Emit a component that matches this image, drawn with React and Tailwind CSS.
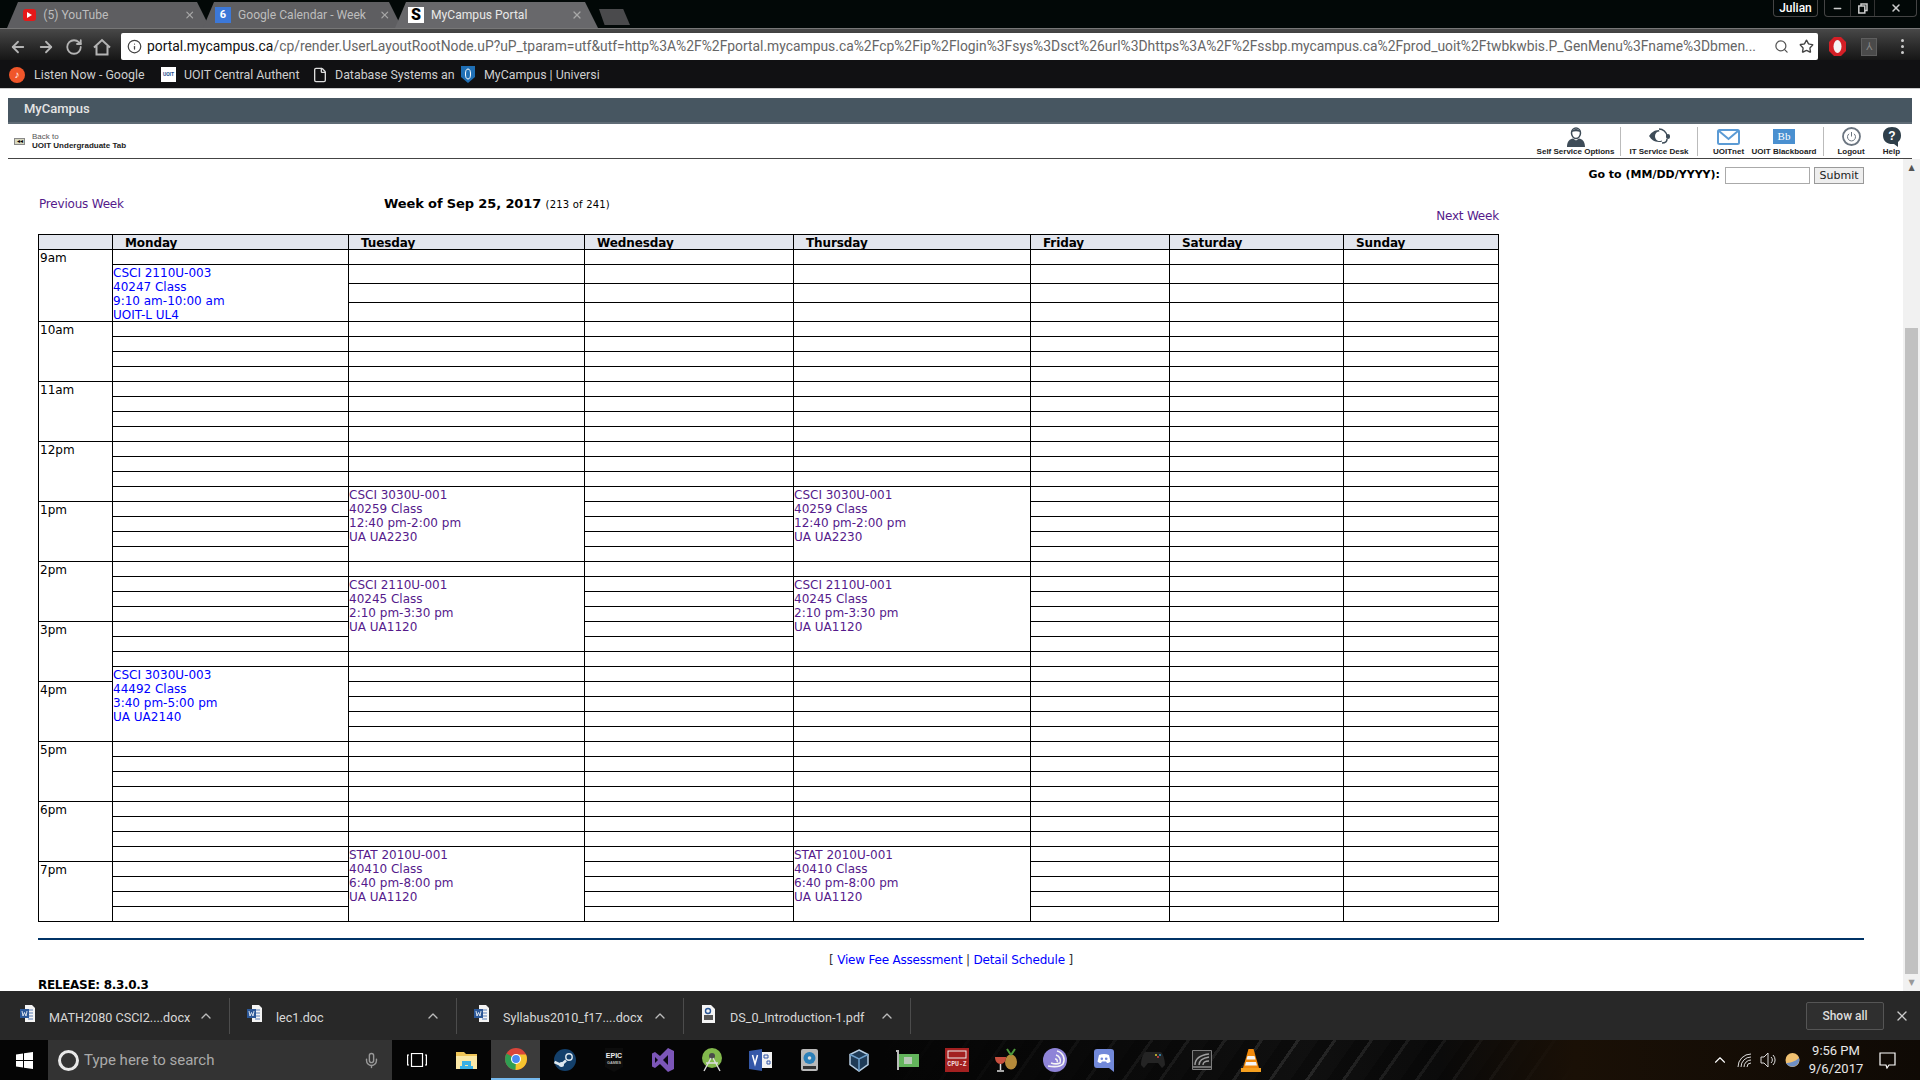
import { ArrowLeft, ArrowRight, RotateCw, Info, Star, Search, Mic, ChevronUp, X, Minus, File } from 'lucide-react';

const verdana = 'font-["DejaVu_Sans",sans-serif]';

// 시간표 슬롯: 높이(px)와 시간 라벨
const hours = ['9am', '10am', '11am', '12pm', '1pm', '2pm', '3pm', '4pm', '5pm', '6pm', '7pm'];
const days = [
  { name: 'Monday', width: 'w-[236px]' },
  { name: 'Tuesday', width: 'w-[236px]' },
  { name: 'Wednesday', width: 'w-[209px]' },
  { name: 'Thursday', width: 'w-[237px]' },
  { name: 'Friday', width: 'w-[139px]' },
  { name: 'Saturday', width: 'w-[174px]' },
  { name: 'Sunday', width: 'w-[155px]' },
];

const purple = 'text-[#551a8b]';
const blue = 'text-[#0000ff]';

// 슬롯 번호 기준 수업 위치 (0 = 9:00)
const events = {
  Monday: [
    { start: 1, span: 3, color: blue, lines: ['CSCI 2110U-003', '40247 Class', '9:10 am-10:00 am', 'UOIT-L UL4'] },
    { start: 27, span: 5, color: blue, lines: ['CSCI 3030U-003', '44492 Class', '3:40 pm-5:00 pm', 'UA UA2140'] },
  ],
  Tuesday: [
    { start: 15, span: 5, color: purple, lines: ['CSCI 3030U-001', '40259 Class', '12:40 pm-2:00 pm', 'UA UA2230'] },
    { start: 21, span: 5, color: purple, lines: ['CSCI 2110U-001', '40245 Class', '2:10 pm-3:30 pm', 'UA UA1120'] },
    { start: 39, span: 5, color: purple, lines: ['STAT 2010U-001', '40410 Class', '6:40 pm-8:00 pm', 'UA UA1120'] },
  ],
  Thursday: [
    { start: 15, span: 5, color: purple, lines: ['CSCI 3030U-001', '40259 Class', '12:40 pm-2:00 pm', 'UA UA2230'] },
    { start: 21, span: 5, color: purple, lines: ['CSCI 2110U-001', '40245 Class', '2:10 pm-3:30 pm', 'UA UA1120'] },
    { start: 39, span: 5, color: purple, lines: ['STAT 2010U-001', '40410 Class', '6:40 pm-8:00 pm', 'UA UA1120'] },
  ],
};

function Schedule() {
  const slots = Array.from({ length: 44 }, (_, i) => i);
  return (
    <table className="table-fixed border-collapse w-[1461px] text-[12px] leading-[14px] text-black">
      <colgroup>
        <col className="w-[74px]" />
        {days.map((d) => <col key={d.name} className={d.width} />)}
      </colgroup>
      <thead>
        <tr className="h-[15px]">
          <th className="border border-black bg-[#e3e6ee] p-0" />
          {days.map((d) => (
            <th key={d.name} className="border border-black bg-[#e3e6ee] p-0 pl-[12px] text-left font-bold text-[12px] leading-[13px] tracking-[-0.1px]">
              <div className="relative top-px">{d.name}</div>
            </th>
          ))}
        </tr>
      </thead>
      <tbody>
        {slots.map((s) => {
          const height = s >= 1 && s <= 3 ? 'h-[19px]' : 'h-[15px]';
          return (
            <tr key={s} className={height}>
              {s % 4 === 0 && (
                <td rowSpan={4} className="border border-black p-0 pl-px align-top font-normal">
                  <div className="relative top-px">{hours[s / 4]}</div>
                </td>
              )}
              {days.map((d) => {
                const list = events[d.name] || [];
                const ev = list.find((e) => e.start === s);
                const covered = list.some((e) => s > e.start && s < e.start + e.span);
                if (covered) return null;
                if (ev) {
                  return (
                    <td key={d.name} rowSpan={ev.span} className={`border border-black p-0 align-top ${ev.color}`}>
                      <div className="relative top-px">
                        {ev.lines.map((l) => <div key={l}>{l}</div>)}
                      </div>
                    </td>
                  );
                }
                return <td key={d.name} className="border border-black p-0" />;
              })}
            </tr>
          );
        })}
      </tbody>
    </table>
  );
}

function Tab({ icon, title, active, width, pad, titleWidth, overlap }) {
  return (
    <div className={`relative flex items-center h-[26px] ${width} ${overlap} ${active ? 'z-10' : ''}`}>
      <div className={`absolute inset-0 [clip-path:polygon(0_100%,11px_0,calc(100%-13px)_0,100%_100%)] ${active ? 'bg-[#68686b]' : 'bg-[#5e5e61]'}`} />
      <div className={`relative flex items-center w-full ${pad} gap-[7px]`}>
        {icon}
        <span className={`${titleWidth} whitespace-nowrap text-[12.1px] ${active ? 'text-[#e8e8e8]' : 'text-[#bdbdbd]'}`}>{title}</span>
        <X size={12} className="ml-auto text-[#a8a8a8]" strokeWidth={2.5} />
      </div>
    </div>
  );
}

function Bookmark({ icon, label, width, gap }) {
  return (
    <div className={`flex items-center ${gap} ${width}`}>
      {icon}
      <span className="whitespace-nowrap text-[12.4px] text-[#cfcfcf]">{label}</span>
    </div>
  );
}

function PortalIcon({ label, width, margin, children }) {
  return (
    <div className={`flex flex-col items-center justify-end h-[30px] ${width} ${margin}`}>
      <div className="h-[21px] flex items-center">{children}</div>
      <span className="text-[8px] leading-[9px] font-bold text-[#222] whitespace-nowrap">{label}</span>
    </div>
  );
}

function Download({ icon, name }) {
  return (
    <div className="flex items-center w-[227px] h-[36px] border-r border-[#4c4c4c] pl-[17px] pr-[15px]">
      <div className="w-[15px] shrink-0 flex justify-center -mt-[4px]">{icon}</div>
      <span className="ml-[14px] pt-[6px] flex-1 whitespace-nowrap text-[12.6px] text-[#d8d8d8]">{name}</span>
      <ChevronUp size={16} className="text-[#bbb]" />
    </div>
  );
}

const WordIcon = () => (
  <svg width="15" height="17" viewBox="0 0 15 17">
    <path d="M5 0h7l3 3v14H5z" fill="#f4f4f4" />
    <path d="M8 5h5M8 8h5M8 11h5M8 14h5" stroke="#5a7fb8" />
    <rect x="0" y="4" width="9" height="9" fill="#2b5797" />
    <path d="M2 6l1 5 1.500-3.500L6 11l1-5" stroke="#fff" fill="none" strokeWidth="0.8" />
  </svg>
);

const PdfIcon = () => (
  <svg width="13" height="18" viewBox="0 0 13 18">
    <path d="M0 0h9l4 4v14H0z" fill="#f4f4f4" />
    <circle cx="6" cy="6" r="2.500" fill="none" stroke="#2b5797" strokeWidth="1.400" />
    <rect x="2" y="10" width="9" height="5" fill="#555" />
  </svg>
);

// 작업 표시줄 아이콘
function TaskIcon({ children, active, margin }) {
  return (
    <div className={`flex items-center justify-center shrink-0 w-[49px] h-[40px] ${margin} ${active ? 'bg-[#3b3b3b] border-b-[2px] border-[#76b9ed]' : ''}`}>
      {children}
    </div>
  );
}

const taskIcons = [
  <svg key="view" width="20" height="14" viewBox="0 0 20 14" fill="none" stroke="#fff" strokeWidth="1.200"><rect x="4.500" y="0.500" width="11" height="13" /><path d="M2 2H0.600v10H2M18 2h1.400v10H18" /></svg>,
  <svg key="explorer" width="22" height="18" viewBox="0 0 22 18"><path d="M0 1h8l2 2h11v15H0z" fill="#f0c557" /><path d="M0 5h21v13H0z" fill="#fbe8a6" /><path d="M6 10h9v8h-3v-4H9v4H6z" fill="#3ab0e6" /><rect x="4" y="15" width="13" height="3" fill="#3ab0e6" /></svg>,
  <svg key="chrome" width="22" height="22" viewBox="0 0 22 22"><circle cx="11" cy="11" r="11" fill="#d9453a" /><path d="M11 11L1.500 5.500A11 11 0 0 0 11 22z" fill="#2f9e52" /><path d="M11 11l-.500 11A11 11 0 0 0 21 6.500H11z" fill="#f6c42f" /><circle cx="11" cy="11" r="5" fill="#fff" /><circle cx="11" cy="11" r="3.900" fill="#4a8af4" /></svg>,
  <svg key="steam" width="22" height="22" viewBox="0 0 22 22"><circle cx="11" cy="11" r="11" fill="#14406b" /><circle cx="15" cy="8" r="3.200" fill="none" stroke="#dfe8ef" strokeWidth="1.400" /><path d="M0.500 13l6.500 3 5-4.500" stroke="#dfe8ef" strokeWidth="2.500" fill="none" /><circle cx="7.500" cy="15.500" r="2.500" fill="#dfe8ef" /></svg>,
  <svg key="epic" width="20" height="24" viewBox="0 0 20 24"><path d="M1 0h18v19l-9 5-9-5z" fill="#0c0c0c" /><text x="10" y="10" textAnchor="middle" fontSize="7" fontWeight="bold" fill="#eee" fontFamily="'Liberation Sans',sans-serif">EPIC</text><text x="10" y="16" textAnchor="middle" fontSize="3.800" fontWeight="bold" fill="#bbb" fontFamily="'Liberation Sans',sans-serif">GAMES</text></svg>,
  <svg key="vs" width="24" height="24" viewBox="0 0 24 24"><path d="M17 0l6 3v18l-6 3-8-8-5 4-3-1.500v-13L4 4l5 4z" fill="#7c56b8" /><path d="M17 7l-5 5 5 5z" fill="#0a0812" /><path d="M4 9v6l3-3z" fill="#0a0812" /></svg>,
  <svg key="android" width="22" height="24" viewBox="0 0 22 24"><circle cx="11" cy="10" r="10" fill="#82b84c" /><circle cx="11" cy="8" r="3" fill="#4a4a4a" /><path d="M10 10L3 23M12 10l7 13M5 15h12" stroke="#dcdcdc" strokeWidth="1.400" fill="none" /></svg>,
  <svg key="visio" width="23" height="22" viewBox="0 0 23 22"><path d="M9 3h14v16H9z" fill="#f2f2f2" /><path d="M0 2l13-2v22L0 20z" fill="#3458a8" /><path d="M3.500 6l2.500 9 2.500-9" stroke="#fff" fill="none" strokeWidth="1.500" /><path d="M15 6h4v3h-4zM18 12h3v3h-3z" fill="none" stroke="#3458a8" /></svg>,
  <svg key="hdd" width="17" height="22" viewBox="0 0 17 22"><rect width="17" height="22" rx="2" fill="#b9b9b9" /><circle cx="8.500" cy="9" r="6" fill="#2c80b9" /><circle cx="8.500" cy="9" r="1.800" fill="#ddd" /><rect x="2" y="17" width="13" height="3" fill="#333" /></svg>,
  <svg key="vbox" width="20" height="23" viewBox="0 0 20 23" fill="none"><path d="M10 1l9 4.500v10L10 22 1 15.500v-10z" fill="#1f3b57" stroke="#b6cde2" strokeWidth="1.500" /><path d="M1 5.500L10 10l9-4.500M10 10v12" stroke="#6ea0cc" strokeWidth="1.500" /></svg>,
  <svg key="gpu" width="23" height="20" viewBox="0 0 23 20"><path d="M0 0h3v20H1V2H0z" fill="#bbb" /><rect x="3" y="4" width="20" height="13" fill="#63b45c" /><rect x="8" y="7" width="8" height="7" fill="#b8c8b8" /></svg>,
  <svg key="cpuz" width="24" height="24" viewBox="0 0 24 24"><rect width="24" height="24" fill="#a32020" /><rect x="3" y="3" width="18" height="7" fill="none" stroke="#eee" /><text x="12" y="18" textAnchor="middle" fontSize="6.500" fontWeight="bold" fill="#f2dada" fontFamily="'Liberation Mono',monospace">CPU-Z</text></svg>,
  <svg key="drink" width="24" height="24" viewBox="0 0 24 24"><ellipse cx="17" cy="14" rx="6" ry="7.500" fill="#b58a3a" /><path d="M17 7l-4-6M17 7l4-6" stroke="#4f9a3c" strokeWidth="2" /><path d="M1 9h11c0 4-2 7-5.500 7S1 13 1 9z" fill="#c8503f" /><path d="M6.500 16v6M3 23h7" stroke="#ddd" strokeWidth="1.500" /></svg>,
  <svg key="torrent" width="24" height="24" viewBox="0 0 24 24" fill="none"><circle cx="12" cy="12" r="12" fill="#8f84d8" /><path d="M14 3a9 9 0 0 1 6 13c-3 3-9 3-15 2M13 7a6 6 0 0 1 4 8c-2 1-6 1-9 0M12 11a2 2 0 0 1 2 3" stroke="#f4f4f4" strokeWidth="1.600" /></svg>,
  <svg key="discord" width="20" height="23" viewBox="0 0 20 23"><path d="M3 0h14a3 3 0 0 1 3 3v20l-5-4H3a3 3 0 0 1-3-3V3a3 3 0 0 1 3-3z" fill="#7289da" /><path d="M5 6c3-1.400 7-1.400 10 0l1.500 6.500c-1 1-2.500 1.500-3.500 1.500l-1-1.500H8L7 14c-1 0-2.500-.500-3.500-1.500z" fill="#fff" /><circle cx="7.800" cy="9.800" r="1.300" fill="#7289da" /><circle cx="12.200" cy="9.800" r="1.300" fill="#7289da" /></svg>,
  <svg key="pad" width="24" height="17" viewBox="0 0 24 17"><path d="M5 0h14c3 0 5 8 5 13l-3 3-4-5H7l-4 5-3-3C0 8 2 0 5 0z" fill="#242424" /><circle cx="17" cy="5" r="1" fill="#d44" /><circle cx="15" cy="3" r="1" fill="#dc3" /><circle cx="19" cy="3" r="1" fill="#39c" /></svg>,
  <svg key="gfx" width="20" height="20" viewBox="0 0 20 20" fill="none"><path d="M.500.500h19v19H.500z" fill="#222" stroke="#7c7c7c" /><path d="M3 15c0-7 6-10 14-11M7 15c0-4 4-7 10-8M11 15c0-3 2-4 6-4" stroke="#a0a0a0" strokeWidth="1.400" /><path d="M1 17h18" stroke="#8c8c8c" strokeWidth="1.500" /></svg>,
  <svg key="vlc" width="20" height="23" viewBox="0 0 20 23"><path d="M7.500 0h5l5.500 19H2z" fill="#f28a0c" /><path d="M6.500 7h7l1 3.500h-9zM5 13h10l1 3.500H4z" fill="#f4f4f4" /><rect x="0" y="19" width="20" height="4" fill="#f6a01f" /></svg>,
];

export default function App() {
  return (
    <div className="w-[1920px] h-[1080px] overflow-hidden flex flex-col bg-white font-['Roboto','Noto_Sans',sans-serif]">
      {/* 브라우저 탭 */}
      <div className="h-[28px] bg-[#020807] flex items-end pl-[7px] relative shrink-0">
        <Tab width="w-[203px]" pad="pl-[16px] pr-[15px]" titleWidth="w-[140px]" title="(5) YouTube" icon={<div className="w-[14px] h-[12px] rounded-[3px] bg-[#e61919] flex items-center justify-center"><div className="w-0 h-0 border-y-[3px] border-y-transparent border-l-[5px] border-l-white" /></div>} />
        <Tab overlap="-ml-[7px]" width="w-[199px]" pad="pl-[12px] pr-[11px]" titleWidth="w-[140px]" title="Google Calendar - Week" icon={<div className="w-[16px] h-[16px] bg-[#3c78d8] text-white text-[11px] font-bold flex items-center justify-center shrink-0">6</div>} />
        <Tab active overlap="-ml-[7px]" width="w-[203px]" pad="pl-[13px] pr-[15px]" titleWidth="w-[130px]" title="MyCampus Portal" icon={<div className="w-[16px] h-[16px] bg-white text-black text-[16px] font-black flex items-center justify-center shrink-0">S</div>} />
        <div className="ml-[1px] mb-[3px] w-[31px] h-[16px] bg-[#4a4a4c] [clip-path:polygon(0_0,78%_0,100%_100%,18%_100%)]" />
        <div className="absolute right-0 top-0 flex items-start">
          <div className="w-[45px] h-[17px] mr-[6px] border border-t-0 border-[#444] rounded-b-[4px] text-white text-[12px] font-medium text-center leading-[16px]">Julian</div>
          <div className="w-[93px] h-[17px] mr-[3px] border border-t-0 border-[#444] rounded-b-[4px] flex items-center text-white">
            <div className="w-[25px] flex justify-center"><Minus size={11} strokeWidth={3} className="text-[#ccc]" /></div>
            <div className="w-[25px] h-full flex items-center justify-center border-x border-[#333]">
              <svg width="10" height="11" viewBox="0 0 10 11" fill="none" stroke="#ccc" strokeWidth="1.500"><rect x="0.800" y="3" width="6" height="7" /><path d="M3 3V1h6v6.500H7" /></svg>
            </div>
            <div className="flex-1 flex justify-center"><X size={12} strokeWidth={3} className="text-[#ccc]" /></div>
          </div>
        </div>
      </div>

      {/* 주소 표시줄 */}
      <div className="h-[32px] shrink-0 border-t border-[#777] bg-gradient-to-b from-[#484848] to-[#161616] flex items-end">
        <div className="flex items-center h-[27px] w-[121px] pl-[9px] gap-[10px] text-[#b4b4b4] shrink-0">
          <ArrowLeft size={18} strokeWidth={2.4} />
          <ArrowRight size={18} strokeWidth={2.4} />
          <RotateCw size={18} strokeWidth={2.4} />
          <svg width="18" height="18" viewBox="0 0 18 18" fill="none" stroke="currentColor" strokeWidth="2"><path d="M1 9.500L9 2l8 7.500M3.500 8v8.500h11V8" /></svg>
        </div>
        <div className="w-[1697px] h-[27px] shrink-0 bg-white rounded-[2px] flex items-center pl-[6px] text-[13.87px] text-[#666] whitespace-nowrap overflow-hidden">
          <Info size={15} className="text-[#444] mr-[5px] shrink-0" />
          <span className="w-[1619px] shrink-0"><span className="text-[#111]">portal.mycampus.ca</span>/cp/render.UserLayoutRootNode.uP?uP_tparam=utf&amp;utf=http%3A%2F%2Fportal.mycampus.ca%2Fcp%2Fip%2Flogin%3Fsys%3Dsct%26url%3Dhttps%3A%2F%2Fssbp.mycampus.ca%2Fprod_uoit%2Ftwbkwbis.P_GenMenu%3Fname%3Dbmen...</span>
          <Search size={15} className="ml-[8px] shrink-0 text-[#555]" />
          <Star size={15} strokeWidth={2.2} className="ml-[10px] shrink-0 text-[#444]" />
        </div>
        <div className="flex-1 h-[27px] flex items-center pl-[11px]">
          <svg width="17" height="19" viewBox="0 0 17 19"><path d="M5 0h7l5 5v9l-5 5H5l-5-5V5z" fill="#d41f26" /><ellipse cx="8.500" cy="9.500" rx="4" ry="6.500" fill="#f4f4f4" /></svg>
          <div className="ml-[15px] w-[16px] h-[18px] bg-[#4a4a4a] border border-[#5e5e5e] text-[#888] text-[11px] leading-[16px] text-center">⅄</div>
          <div className="ml-[24px] flex flex-col gap-[3px]">
            <div className="w-[3px] h-[3px] rounded-full bg-[#ccc]" />
            <div className="w-[3px] h-[3px] rounded-full bg-[#ccc]" />
            <div className="w-[3px] h-[3px] rounded-full bg-[#ccc]" />
          </div>
        </div>
      </div>

      {/* 북마크 */}
      <div className="h-[29px] bg-[#111113] border-b border-[#ccc] flex items-center pl-[9px] pt-[2px] shrink-0">
        <Bookmark width="w-[152px]" gap="gap-[9px]" label="Listen Now - Google" icon={<div className="shrink-0 w-[16px] h-[16px] rounded-full bg-[#f0562a] text-white text-[10px] text-center leading-[16px]">♪</div>} />
        <Bookmark width="w-[151px]" gap="gap-[8px]" label="UOIT Central Authent" icon={<div className="shrink-0 w-[15px] h-[15px] bg-white text-[#1b4f8f] text-[5px] font-bold text-center leading-[15px]">UOIT</div>} />
        <Bookmark width="w-[149px]" gap="gap-[7px]" label="Database Systems an" icon={<File size={16} className="shrink-0 text-[#ddd]" />} />
        <Bookmark width="w-[138px]" gap="gap-[9px]" label="MyCampus | Universi" icon={<svg className="shrink-0" width="14" height="17" viewBox="0 0 14 17"><path d="M0 0h14v11l-7 6-7-6z" fill="#1f6fb5" /><ellipse cx="7" cy="8" rx="2.500" ry="5" fill="none" stroke="#fff" /></svg>} />
      </div>

      {/* 포털 페이지 */}
      <div className="h-[902px] shrink-0 bg-white overflow-hidden flex flex-col relative">
        <div className="mt-[9px] ml-[8px] w-[1904px] h-[26px] bg-[#475661] border-b-2 border-[#5f6b75] text-[#e4e4e4] text-[13px] font-medium pl-[16px] leading-[22px] shrink-0">MyCampus</div>
        <div className="ml-[8px] w-[1904px] h-[35px] border-b border-[#444] flex items-center justify-between shrink-0 font-['Liberation_Sans',sans-serif]">
          <div className="flex items-center pl-[6px] gap-[7px]">
            <div className="w-[11px] h-[7px] bg-[#d8d8c0] border border-[#888] text-[6px] leading-[5px] text-center">◂◂</div>
            <div className="text-[8px] leading-[9px] text-[#222]">
              <div className="text-[#555]">Back to</div>
              <div className="font-bold">UOIT Undergraduate Tab</div>
            </div>
          </div>
          <div className="flex items-end pr-[12px]">
            <PortalIcon label="Self Service Options" width="w-[77px]">
              <svg width="20" height="20" viewBox="0 0 20 20"><path d="M5.500 6a4.500 5 0 0 1 9 0c0 3-2 5.500-4.500 5.500S5.500 9 5.500 6z" fill="#fff" stroke="#3e4c58" strokeWidth="1.500" /><path d="M5.500 5c1-4 8-4 9 0-3-1-6-1-9 0z" fill="#3e4c58" /><path d="M1 20c0-6 3-8 6-8.500l3 2 3-2c3 .500 6 2.500 6 8.500z" fill="#3e4c58" /></svg>
            </PortalIcon>
            <div className="ml-[6px] w-px h-[29px] bg-[#bbb]" />
            <PortalIcon label="IT Service Desk" width="w-[58px]" margin="ml-[9px]">
              <svg width="22" height="18" viewBox="0 0 22 18" fill="none"><path d="M11 1a8 8 0 0 1 8 7" stroke="#3e4c58" strokeWidth="1.500" /><path d="M11 2C6 2 3 5 1 8c2 3 5 6 10 6 1 0 2 0 3-.500" fill="#3e4c58" /><path d="M7 8a4.500 4.500 0 0 1 9 0c0 3-2 5-4.500 5S7 11 7 8z" fill="#fff" /><rect x="18" y="6" width="4" height="5" rx="2" fill="#3e4c58" /><path d="M19 11c0 3-2 4-5 4" stroke="#3e4c58" strokeWidth="1.500" /></svg>
            </PortalIcon>
            <div className="ml-[9px] w-px h-[29px] bg-[#bbb]" />
            <PortalIcon label="UOITnet" width="w-[31px]" margin="ml-[15px]">
              <svg width="23" height="16" viewBox="0 0 23 16" fill="none"><rect x="1" y="1" width="21" height="14" rx="1.500" fill="#fff" stroke="#5b9bd5" strokeWidth="2" /><path d="M2 2l9.500 8L21 2" stroke="#5b9bd5" strokeWidth="2" /></svg>
            </PortalIcon>
            <PortalIcon label="UOIT Blackboard" width="w-[64px]" margin="ml-[8px]">
              <div className="w-[22px] h-[15px] bg-[#4a90d0] text-white text-[11px] font-['Liberation_Serif',serif] text-center leading-[15px]">Bb</div>
            </PortalIcon>
            <div className="ml-[7px] w-px h-[29px] bg-[#bbb]" />
            <PortalIcon label="Logout" width="w-[26px]" margin="ml-[14px]">
              <svg width="19" height="19" viewBox="0 0 19 19" fill="none"><circle cx="9.500" cy="9.500" r="8.500" stroke="#6b7580" strokeWidth="1.800" /><path d="M9.500 5v4.500" stroke="#6b7580" /><path d="M7 6.800a4 4 0 1 0 5 0" stroke="#6b7580" /></svg>
            </PortalIcon>
            <PortalIcon label="Help" width="w-[17px]" margin="ml-[19px]">
              <svg width="18" height="20" viewBox="0 0 18 20"><path d="M9 0c5.500 0 9 3 9 8.500 0 3-1 5-3 6.500v5l-4-3C4 17.500 0 14 0 8.500S3.500 0 9 0z" fill="#2f3f4a" /><text x="9" y="13" textAnchor="middle" fontSize="12" fontWeight="bold" fill="#fff">?</text></svg>
            </PortalIcon>
          </div>
        </div>

        {/* 스크롤 내용 */}
        <div className={`flex-1 min-h-0 flex ${verdana}`}>
          <div className="w-[1903px] overflow-hidden pl-[38px] pr-[39px]">
            <div className="flex justify-end items-center h-[17px] mt-[8px] gap-[5px]">
              <span className="text-[11px] font-bold text-black">Go to (MM/DD/YYYY):</span>
              <input aria-label="date" className="w-[85px] h-[17px] border border-[#aaa] bg-white" />
              <button className="w-[50px] h-[17px] ml-[-1px] border border-[#999] bg-[#eee] text-[11px] text-[#222] leading-none">Submit</button>
            </div>
            <div className="relative h-[50px] w-[1461px]">
              <a className="absolute left-px top-[12px] text-[12px] tracking-[-0.2px] text-[#551a8b] leading-[16px]">Previous Week</a>
              <div className="absolute left-[346px] top-[12px] text-[13px] font-bold tracking-[-0.12px] text-black leading-[16px] whitespace-nowrap">Week of Sep 25, 2017 <span className="text-[10px] font-normal tracking-[0.2px]">(213 of 241)</span></div>
              <a className="absolute right-0 top-[24px] text-[12px] tracking-[-0.2px] text-[#551a8b] leading-[16px]">Next Week</a>
            </div>
            <Schedule />
            <div className="mt-[16px] h-[2px] bg-[#003366]" />
            <div className="mt-[12px] text-center text-[12px] tracking-[-0.2px] leading-[16px] text-[#0000ff]">
              <span className="text-[#333]">[</span> View Fee Assessment <span className="text-[#333]">|</span> Detail Schedule <span className="text-[#333]">]</span>
            </div>
            <div className="mt-[9px] text-[12px] font-bold tracking-[-0.3px] leading-[16px] text-black">RELEASE: 8.3.0.3</div>
          </div>
          <div className="w-[17px] bg-[#f1f1f1] flex flex-col items-center relative">
            <div className="h-[17px] text-[8px] text-[#555] leading-[17px]">▲</div>
            <div className="mt-[152px] w-[13px] h-[646px] bg-[#c1c1c1]" />
            <div className="h-[17px] text-[8px] text-[#999] leading-[17px]">▼</div>
          </div>
        </div>
      </div>

      {/* 다운로드 표시줄 */}
      <div className="h-[49px] bg-[#282828] flex items-center shrink-0 pl-[3px]">
        <Download icon={<WordIcon />} name="MATH2080 CSCI2....docx" />
        <Download icon={<WordIcon />} name="lec1.doc" />
        <Download icon={<WordIcon />} name="Syllabus2010_f17....docx" />
        <Download icon={<PdfIcon />} name="DS_0_Introduction-1.pdf" />
        <div className="ml-auto w-[78px] h-[28px] border border-[#555] rounded-[2px] bg-[#2f2f2f] text-[#ddd] text-[12px] font-medium flex items-center justify-center">Show all</div>
        <X size={16} className="mx-[10px] text-[#ccc]" />
      </div>

      {/* 윈도우 작업 표시줄 */}
      <div className="h-[40px] flex items-center shrink-0 bg-[linear-gradient(90deg,#050505_0%,#050505_46%,rgba(5,5,5,0.6)_58%,rgba(5,5,5,0.1)_68%,rgba(5,5,5,0.5)_75%,#1a1006_82%,#0f0a05_100%),repeating-linear-gradient(125deg,#0c0c0c_0,#0c0c0c_12px,#2a2a2a_12px,#2a2a2a_15px,#111_15px,#111_30px)]">
        <div className="w-[48px] flex justify-center shrink-0">
          <svg width="17" height="17" viewBox="0 0 17 17" fill="#fff"><path d="M0 2.500l7-1v6.500H0zM8 1.300l9-1.300v8H8zM0 9h7v6.500l-7-1zM8 9h9v8l-9-1.300z" /></svg>
        </div>
        <div className="w-[344px] h-[40px] shrink-0 bg-[#333] flex items-center pl-[10px] pr-[12px]">
          <div className="w-[21px] h-[21px] rounded-full border-[3px] border-[#e8e8e8]" />
          <span className="ml-[5px] flex-1 text-[15px] text-[#aaa]">Type here to search</span>
          <Mic size={17} className="text-[#999]" />
        </div>
        {taskIcons.map((icon, i) => (
          <TaskIcon key={i} active={i === 2} margin={i === 1 ? 'ml-[1px]' : ''}>{icon}</TaskIcon>
        ))}
        <div className="flex-1" />
        <div className="flex items-center text-white">
          <ChevronUp size={18} strokeWidth={1.5} />
          <svg className="ml-[8px]" width="16" height="15" viewBox="0 0 16 15" fill="none" stroke="#ddd"><path d="M1 14A13 13 0 0 1 14 1M4 14A10 10 0 0 1 14 4M7 14a7 7 0 0 1 7-7M10 14a4 4 0 0 1 4-4" /></svg>
          <svg className="ml-[7px]" width="17" height="16" viewBox="0 0 17 16" fill="none" stroke="#ddd"><path d="M1 5h3l4-4v14l-4-4H1z" /><path d="M11 5a4 4 0 0 1 0 6M13 3a7 7 0 0 1 0 10" /></svg>
          <svg className="ml-[8px]" width="15" height="16" viewBox="0 0 15 16"><circle cx="7.500" cy="8" r="7" fill="#f0c070" /><path d="M1 11c3 0 9-1 13-5a7 7 0 0 1-13 5z" fill="#6f8fc4" /></svg>
          <div className="ml-[7px] w-[58px] text-center text-[13px] leading-[18px] text-[#e8e8e8]">9:56 PM<br />9/6/2017</div>
          <svg className="ml-[14px] mr-[24px]" width="17" height="17" viewBox="0 0 17 17" fill="none" stroke="#fff" strokeWidth="1.200"><path d="M1 1h15v12H10l-2 3-1-3H1z" /></svg>
        </div>
      </div>
    </div>
  );
}
